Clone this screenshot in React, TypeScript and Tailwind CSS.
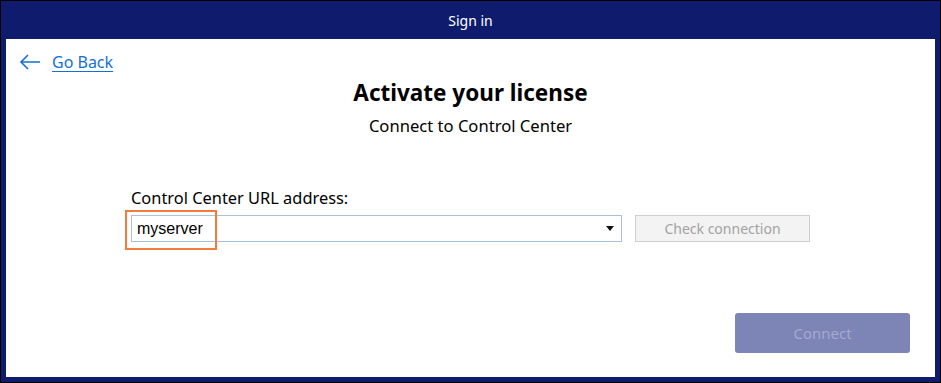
import React from "react";

export default function App() {
  const seg = { fontFamily: '"Noto Sans", "Open Sans", sans-serif' };
  return (
    <div className="w-[941px] h-[383px] bg-black p-px">
      <div className="w-full h-full bg-[#0f1c6d] flex flex-col px-[5px] pb-[5px]" style={seg}>
        <div className="h-[38px] flex items-center justify-center text-white text-[14px]">Sign in</div>
        <div className="flex-1 bg-white relative flex flex-col">
          <div className="pl-[13px] pt-[12px] h-[40px]">
            <a className="inline-flex items-center text-[#1570d6] text-[16px] underline underline-offset-[3px] decoration-1 leading-[22px] cursor-pointer">
              <svg width="22" height="18" viewBox="0 0 22 18" className="mr-[11px]">
                <path d="M21 9H2M9 2L2 9l7 7" fill="none" stroke="#1570d6" strokeWidth="1.6" />
              </svg>
              Go Back
            </a>
          </div>
          <div className="flex flex-col items-center">
            <div className="text-[22.5px] font-bold text-black leading-[30px] -mt-[1px]">Activate your license</div>
            <div className="text-[16.6px] text-black leading-[22px] mt-[7px]">Connect to Control Center</div>
          </div>
          <div className="pl-[125px] mt-[50px]">
            <div className="text-[16.4px] text-black leading-[22px]">Control Center URL address:</div>
            <div className="flex items-center mt-[6px]">
              <div className="relative w-[491px] h-[27px]">
                <div className="absolute inset-0 border border-[#a8c2dc] flex items-center justify-between pl-[5px] pr-[7px]">
                  <span className="text-[16px] text-black" style={{ fontFamily: '"Liberation Sans", Arial, sans-serif' }}>myserver</span>
                  <svg width="8" height="5" viewBox="0 0 8 5"><path d="M0 0h8L4 5z" fill="#111" /></svg>
                </div>
                <div className="absolute left-[-6px] top-[-5px] w-[92px] h-[40px] border-2 border-[#f47b3a]" />
              </div>
              <div className="ml-[13px] w-[175px] h-[27px] bg-[#f3f3f3] border border-[#cfcfcf] flex items-center justify-center text-[14px] text-[#a2a2a2]">
                Check connection
              </div>
            </div>
          </div>
          <div className="flex-1" />
          <div className="flex justify-end pr-[25px] pb-[24px]">
            <div className="w-[175px] h-[40px] bg-[#7c85b6] rounded-[3px] flex items-center justify-center text-[15px] text-[#a4aad0]">
              Connect
            </div>
          </div>
        </div>
      </div>
    </div>
  );
}
